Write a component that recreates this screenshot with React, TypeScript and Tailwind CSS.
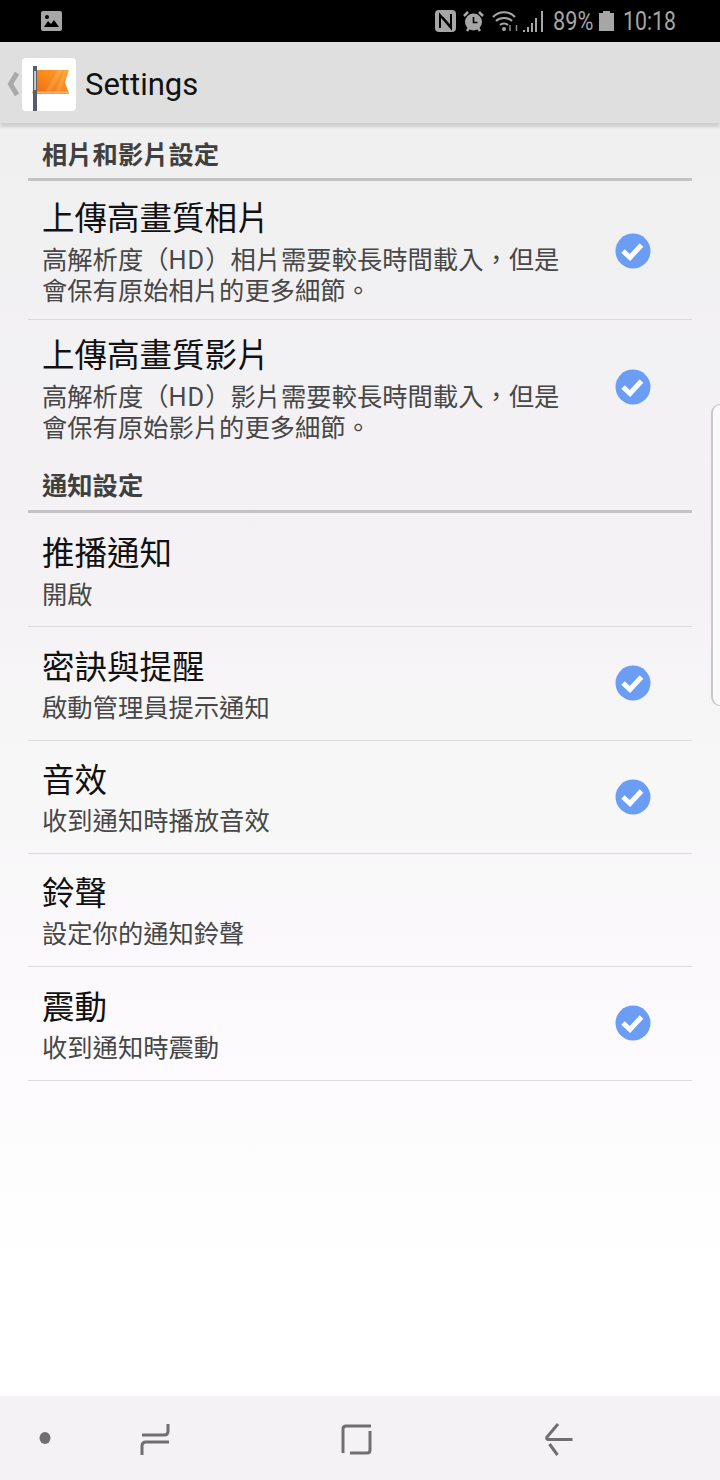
const cjk = "font-['Roboto','Noto_Sans_CJK_TC',sans-serif]";

type Row = {
  title: string;
  sub: string[];
  checked?: boolean;
  box: string;
  textTop: string;
  subTop: string;
  checkTop?: string;
};

const photoRows: Row[] = [
  { title: "上傳高畫質相片", sub: ["高解析度（HD）相片需要較長時間載入，但是", "會保有原始相片的更多細節。"], checked: true, box: "h-[139px] border-b border-[#dcdadc]", textTop: "pt-[18px]", subTop: "mt-[6px]", checkTop: "mt-[52px]" },
  { title: "上傳高畫質影片", sub: ["高解析度（HD）影片需要較長時間載入，但是", "會保有原始影片的更多細節。"], checked: true, box: "h-[143px]", textTop: "pt-[16px]", subTop: "mt-[6px]", checkTop: "mt-[49px]" },
];

const rowBox = "h-[113px] border-b border-[#dcdadc]";
const rowBoxWide = "h-[114px] border-b border-[#dcdadc]";

const notifyRows: Row[] = [
  { title: "推播通知", sub: ["開啟"], box: rowBoxWide, textTop: "pt-[21px]", subTop: "mt-[6px]" },
  { title: "密訣與提醒", sub: ["啟動管理員提示通知"], checked: true, box: rowBoxWide, textTop: "pt-[21px]", subTop: "mt-[5px]", checkTop: "mt-[38px]" },
  { title: "音效", sub: ["收到通知時播放音效"], checked: true, box: rowBox, textTop: "pt-[20px]", subTop: "mt-[5px]", checkTop: "mt-[38px]" },
  { title: "鈴聲", sub: ["設定你的通知鈴聲"], box: rowBox, textTop: "pt-[20px]", subTop: "mt-[5px]" },
  { title: "震動", sub: ["收到通知時震動"], checked: true, box: rowBoxWide, textTop: "pt-[21px]", subTop: "mt-[5px]", checkTop: "mt-[38px]" },
];

function Check({ className }: { className?: string }) {
  return (
    <svg width="36" height="36" viewBox="0 0 36 36" className={`shrink-0 ${className}`}>
      <circle cx="18" cy="18" r="17.5" fill="#6b9df5" />
      <path d="M8 18l7 6.5L26.5 12" fill="none" stroke="#fff" strokeWidth="5" />
    </svg>
  );
}

// the "HD" sits a little wider in the picture than Roboto sets it
function SubLine({ text }: { text: string }) {
  const parts = text.split("HD");
  if (parts.length < 2) return <div>{text}</div>;
  return (
    <div>
      {parts[0]}
      <span className="tracking-[1px]">HD</span>
      {parts[1]}
    </div>
  );
}

function SettingRow({ row }: { row: Row }) {
  return (
    <div className={`flex items-start justify-between pl-[14px] pr-[41px] ${row.box}`}>
      <div className={row.textTop}>
        <div className="text-[32.500px] leading-[40px] text-[#111]">{row.title}</div>
        <div className={`text-[25.300px] leading-[31px] text-[#474747] ${row.subTop}`}>
          {row.sub.map((s) => (
            <SubLine key={s} text={s} />
          ))}
        </div>
      </div>
      {row.checked && <Check className={row.checkTop} />}
    </div>
  );
}

function SectionTitle({ title, top }: { title: string; top: string }) {
  return (
    <div className={`h-[50px] border-b-[3px] border-[#c4c2c4] pl-[14px] text-[25.300px] leading-[34px] font-bold text-[#404040] ${top}`}>
      {title}
    </div>
  );
}

function StatusBar() {
  return (
    <div className="flex h-[42px] items-center bg-black pl-[41px] pr-[44px] text-[#a6a6a6]">
      <svg width="21" height="20" viewBox="0 0 21 20">
        <rect width="21" height="20" rx="2" fill="#a6a6a6" />
        <path d="M3 16l4-6 3 3 3-4 5 7z" fill="#000" />
        <circle cx="6" cy="6" r="2" fill="#000" />
      </svg>
      <div className="ml-auto flex items-center">
        <svg width="21" height="22" viewBox="0 0 21 22">
          <rect width="21" height="22" rx="4" fill="#a6a6a6" />
          <path d="M5 18V5l11 13V4" fill="none" stroke="#000" strokeWidth="2" />
          <path d="M8 7l9 10" fill="none" stroke="#000" strokeWidth="1" />
        </svg>
        <svg width="21" height="22" viewBox="0 0 21 22" className="ml-[7px]">
          <circle cx="10.500" cy="12" r="8.500" fill="#a6a6a6" />
          <path d="M10.500 7v5.500h4" fill="none" stroke="#000" strokeWidth="1.600" />
          <path d="M1 6l4-4M20 6l-4-4M4 21l2-3M17 21l-2-3" stroke="#a6a6a6" strokeWidth="2.500" />
        </svg>
        <svg width="27" height="22" viewBox="0 0 27 22" className="ml-[8px]">
          <path d="M1 7c6-6.500 16-6.500 22 0M4 11c4-4 12-4 16 0M8 15c2-2 6-2 8 0" fill="none" stroke="#a6a6a6" strokeWidth="2" />
          <circle cx="12" cy="19" r="2" fill="#a6a6a6" />
          <path d="M18 15v6M24.500 21v-6" stroke="#8a8a8a" strokeWidth="1.500" />
        </svg>
        <svg width="21" height="21" viewBox="0 0 21 21" className="ml-[4px]">
          <path d="M1 21v-2M5 21v-5M9 21v-9M13 21V7M19 21V0" stroke="#a6a6a6" strokeWidth="2" />
        </svg>
        <span className="ml-[9px] mt-[2px] w-[40px] origin-left scale-x-[0.87] whitespace-nowrap font-['Roboto',sans-serif] text-[25px] leading-[42px]">89%</span>
        <svg width="15" height="20" viewBox="0 0 15 20" className="ml-[6px]">
          <path d="M4 0h7v2h4v18H0V2h4z" fill="#a6a6a6" />
        </svg>
        <span className="ml-[9px] mt-[2px] w-[53px] origin-left scale-x-[0.85] whitespace-nowrap font-['Roboto',sans-serif] text-[25px] leading-[42px]">10:18</span>
      </div>
    </div>
  );
}

function Header() {
  return (
    <div className="relative flex h-[81px] items-center bg-[#dfdfdf] shadow-[0_4px_3px_rgba(0,0,0,0.14)]">
      <svg width="14" height="26" viewBox="0 0 14 26" className="ml-[6px] mt-[3px]">
        <path d="M11 2L4.500 13 11 24" fill="none" stroke="#a9a9a9" strokeWidth="5" />
      </svg>
      <div className="ml-[2px] mt-[3px] h-[53px] w-[54px] rounded-[4px] bg-white">
        <svg width="54" height="53" viewBox="0 0 54 53">
          <defs>
            <linearGradient id="flag" x1="0" y1="1" x2="1" y2="0">
              <stop offset="0" stopColor="#f26c12" />
              <stop offset="0.5" stopColor="#f98a1e" />
              <stop offset="1" stopColor="#fba02f" />
            </linearGradient>
          </defs>
          <path d="M15 12h32l-4 12 4 12H15z" fill="url(#flag)" />
          <path d="M22 36l14-24h5L27 36zM32 36l11-24h3L37 36z" fill="#fff" opacity="0.12" />
          <path d="M10 34.500h37" stroke="#f8b06a" strokeWidth="2" />
          <rect x="11" y="8" width="4" height="45" fill="#56606c" />
          <rect x="12.300" y="13" width="1.500" height="19" fill="#e6e8ea" />
        </svg>
      </div>
      <span className="ml-[9px] mt-[5px] font-['Roboto',sans-serif] text-[31px] text-[#111]">Settings</span>
    </div>
  );
}

function NavBar() {
  return (
    <div className="flex h-[84px] items-center bg-[#f5f2f6]">
      <svg width="720" height="84" viewBox="0 0 720 84">
        <g fill="none" stroke="#6f6f71" strokeWidth="3">
          <path d="M142 39h22q4 0 4-4v-7M169 46h-23q-4 0-4 4v9" />
          <path d="M343 57V33q0-3 3-3h25M370 35v19q0 3-3 3h-17" />
          <path d="M558 28l-11 13q-1 2 1 2.500h24.500M549.500 48l8 11" />
        </g>
        <ellipse cx="45" cy="42" rx="5.500" ry="6" fill="#6f6f71" />
      </svg>
    </div>
  );
}

export default function App() {
  return (
    <div className={`relative flex h-[1480px] w-[720px] flex-col overflow-hidden ${cjk}`}>
      <StatusBar />
      <Header />
      <div className="flex-1 bg-[linear-gradient(180deg,#f0f0f0_0%,#f5f2f6_37%,#f7f7f7_50%,#fcf9fc_68%,#ffffff_90%)] px-[28px] pt-[8px]">
        <SectionTitle title="相片和影片設定" top="pt-[8px]" />
        {photoRows.map((r) => (
          <SettingRow key={r.title} row={r} />
        ))}
        <SectionTitle title="通知設定" top="pt-[7px]" />
        {notifyRows.map((r) => (
          <SettingRow key={r.title} row={r} />
        ))}
      </div>
      <NavBar />
      <div className="absolute top-[404px] right-0 h-[302px] w-[9px] rounded-l-[10px] border-y border-l-2 border-[#c9c7c9] bg-[#fafafa]" />
    </div>
  );
}
